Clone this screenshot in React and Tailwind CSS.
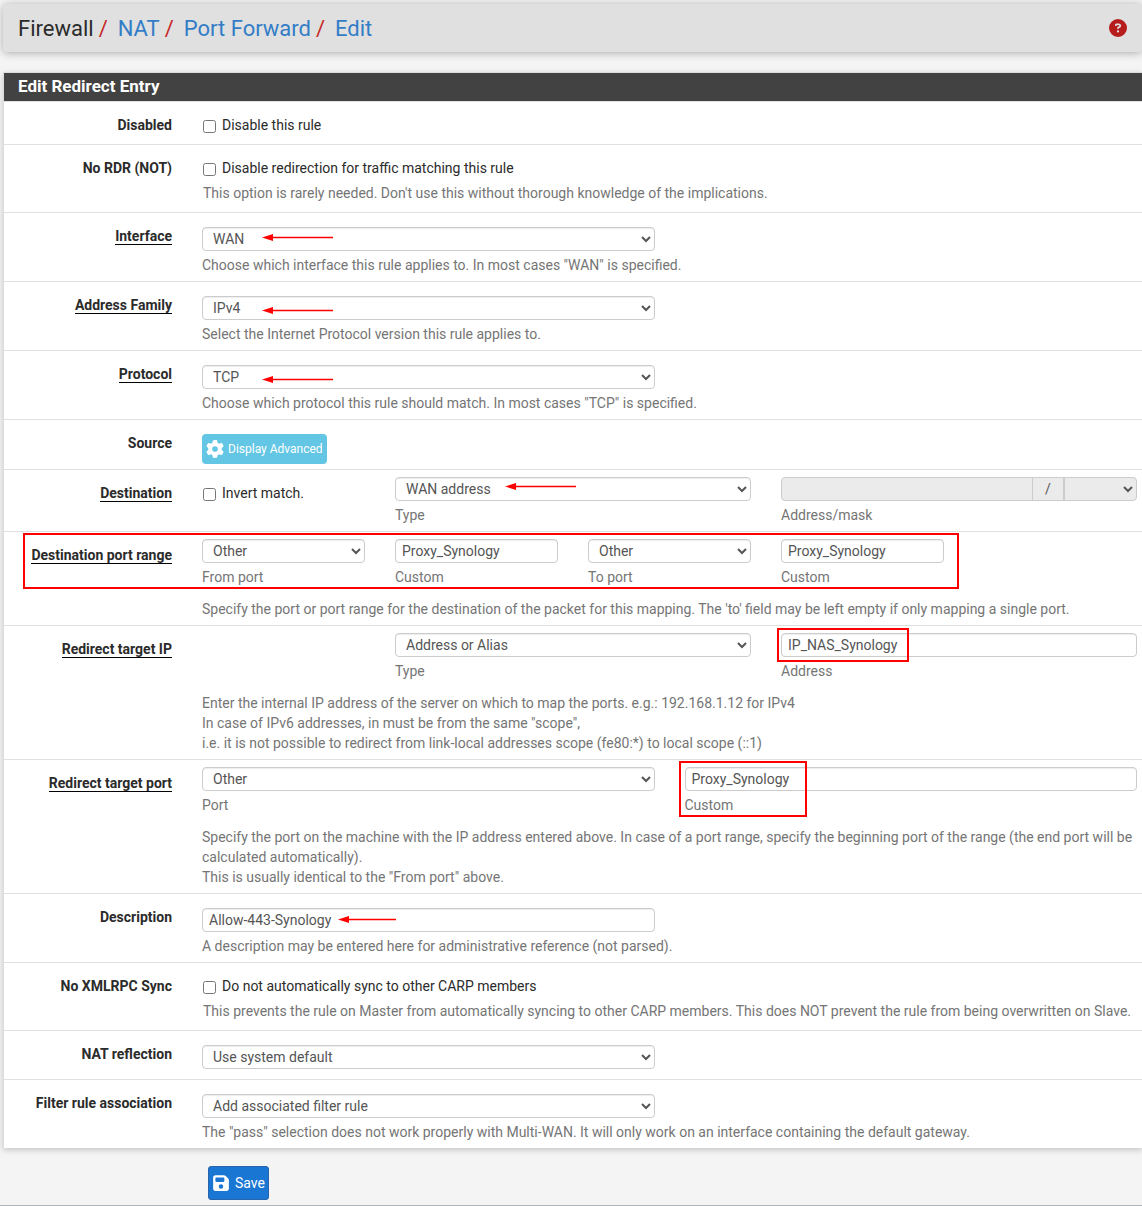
import React from 'react';
import { FaCircleQuestion, FaFloppyDisk, FaGear } from 'react-icons/fa6';

const fieldClass =
  'block h-6 w-full rounded border border-[#ccc] bg-white text-sm text-[#555] shadow-[inset_0_1px_1px_rgba(0,0,0,0.075)]';

const Select = ({ id, value, label }) => (
  <select id={id} aria-label={label} defaultValue={value} className={`${fieldClass} px-[6px]`}>
    <option>{value}</option>
  </select>
);

const TextInput = ({ id, value, label }) => (
  <input id={id} type="text" aria-label={label} defaultValue={value} className={`${fieldClass} px-[6px]`} />
);

const Checkbox = ({ id, text }) => (
  <label className="flex gap-[6px] pl-px leading-5">
    <input id={id} type="checkbox" className="mt-[5px] size-[13px]" />
    <span>{text}</span>
  </label>
);

const Help = ({ children }) => <p className="mt-1 leading-5 text-[#757575]">{children}</p>;

const Note = ({ children }) => <p className="mt-3 leading-5 text-[#757575]">{children}</p>;

const Columns = ({ children }) => <div className="grid grid-cols-10 gap-x-[30px]">{children}</div>;

const Arrow = ({ length = 71, className }) => (
  <svg width={length} height="8" viewBox={`0 0 ${length} 8`} className={`pointer-events-none absolute ${className}`}>
    <path d={`M8 4.5H${length}`} stroke="#f00" strokeWidth="1.5" />
    <path d="M0 4.5L11 1V8Z" fill="#f00" />
  </svg>
);

const Highlight = ({ className }) => (
  <div className={`pointer-events-none absolute border-2 border-[#f00] ${className}`} />
);

const Slash = () => <span className="mr-[10px] ml-[5px] text-[#c62828]">/</span>;

const Row = ({ label, htmlFor, required, className, children }) => (
  <div className="relative grid grid-cols-[168px_1fr] gap-[30px] border-b border-[#e0e0e0] pr-[5px] last:border-b-0">
    <label htmlFor={htmlFor} className="pt-[13px] text-right leading-5 font-bold">
      <span className={required ? 'border-b border-black' : ''}>{label}</span>
    </label>
    <div className={className}>{children}</div>
  </div>
);

const App = () => {
  return (
    <div className="min-h-screen overflow-x-hidden border-b border-[#adb5bd] bg-[#f4f4f4] pt-1 font-['Roboto',sans-serif] text-sm text-[#2b2b2b]">
      <header className="ml-[3px] flex h-12 items-center justify-between rounded-sm bg-[#e0e0e0] px-[15px] shadow-[0_1px_8px_rgba(0,0,0,0.3)]">
        <nav className="pt-px text-[22px] leading-8">
          <span>Firewall</span>
          <Slash />
          <a href="#nat" className="text-[#337dc7]">NAT</a>
          <Slash />
          <a href="#port-forward" className="text-[#337dc7]">Port Forward</a>
          <Slash />
          <a href="#edit" className="text-[#337dc7]">Edit</a>
        </nav>
        <a href="#help" aria-label="Help" className="text-[#b71c1c]">
          <FaCircleQuestion size={18} />
        </a>
      </header>

      <form>
        <section className="mt-5 ml-[3px] border-t border-l border-[#ddd] bg-white shadow-[0_2px_6px_rgba(0,0,0,0.2)]">
          <h2 className="border-b border-[#e0e0e0] bg-[#424242] bg-clip-padding pb-[2px] pl-[14px] text-[17px] leading-[26px] font-bold text-white">
            Edit Redirect Entry
          </h2>

          <Row label="Disabled" htmlFor="disabled" className="pt-[13px] pb-[9px]">
            <Checkbox id="disabled" text="Disable this rule" />
          </Row>

          <Row label="No RDR (NOT)" htmlFor="nordr" className="pt-[13px] pb-[9px]">
            <Checkbox id="nordr" text="Disable redirection for traffic matching this rule" />
            <p className="mt-[5px] pl-px leading-5 text-[#757575]">
              This option is rarely needed. Don't use this without thorough knowledge of the implications.
            </p>
          </Row>

          <Row label="Interface" htmlFor="interface" required className="pt-[14px] pb-[6px]">
            <Columns>
              <div className="relative col-span-5">
                <Select id="interface" value="WAN" />
                <Arrow className="top-[6px] left-[60px]" />
              </div>
            </Columns>
            <Help>Choose which interface this rule applies to. In most cases "WAN" is specified.</Help>
          </Row>

          <Row label="Address Family" htmlFor="ipprotocol" required className="pt-[14px] pb-[6px]">
            <Columns>
              <div className="relative col-span-5">
                <Select id="ipprotocol" value="IPv4" />
                <Arrow className="top-[10px] left-[60px]" />
              </div>
            </Columns>
            <Help>Select the Internet Protocol version this rule applies to.</Help>
          </Row>

          <Row label="Protocol" htmlFor="proto" required className="pt-[14px] pb-[6px]">
            <Columns>
              <div className="relative col-span-5">
                <Select id="proto" value="TCP" />
                <Arrow className="top-[10px] left-[60px]" />
              </div>
            </Columns>
            <Help>Choose which protocol this rule should match. In most cases "TCP" is specified.</Help>
          </Row>

          <Row label="Source" htmlFor="srcadv" className="pt-[14px] pb-[5px]">
            <button
              id="srcadv"
              type="button"
              className="flex h-[30px] items-center gap-1 rounded-sm bg-[#62c6e4] px-1 text-xs text-white"
            >
              <FaGear size={18} />
              Display Advanced
            </button>
          </Row>

          <Row label="Destination" htmlFor="dstnot" required className="pt-[7px] pb-[6px]">
            <Columns>
              <div className="col-span-2 pt-[6px]">
                <Checkbox id="dstnot" text="Invert match." />
              </div>
              <div className="relative col-span-4">
                <Select label="Type" value="WAN address" />
                <Arrow className="top-[5px] left-[110px]" />
                <Help>Type</Help>
              </div>
              <div className="col-span-4">
                <div className="flex h-6 overflow-hidden rounded border border-[#ccc] bg-[#ebebeb] text-[#555]">
                  <input type="text" aria-label="Address" disabled className="min-w-0 flex-1 px-[6px]" />
                  <span className="w-8 border-x border-[#ccc] text-center leading-[22px]">/</span>
                  <select aria-label="Mask" disabled className="w-[72px] border-l border-[#ccc]">
                    <option></option>
                  </select>
                </div>
                <Help>Address/mask</Help>
              </div>
            </Columns>
          </Row>

          <Row label="Destination port range" htmlFor="dstbeginport" required className="pt-[7px] pb-[6px]">
            <Columns>
              <div className="col-span-2">
                <Select id="dstbeginport" label="From port" value="Other" />
                <Help>From port</Help>
              </div>
              <div className="col-span-2">
                <TextInput label="Custom from port" value="Proxy_Synology" />
                <Help>Custom</Help>
              </div>
              <div className="col-span-2">
                <Select label="To port" value="Other" />
                <Help>To port</Help>
              </div>
              <div className="col-span-2">
                <TextInput label="Custom to port" value="Proxy_Synology" />
                <Help>Custom</Help>
              </div>
            </Columns>
            <Note>
              Specify the port or port range for the destination of the packet for this mapping. The 'to' field may be
              left empty if only mapping a single port.
            </Note>
            <Highlight className="top-px right-[183px] left-[19px] h-14" />
          </Row>

          <Row label="Redirect target IP" htmlFor="localip" required className="pt-[7px] pb-[6px]">
            <Columns>
              <div className="col-span-4 col-start-3">
                <Select label="Type" value="Address or Alias" />
                <Help>Type</Help>
              </div>
              <div className="relative col-span-4">
                <TextInput id="localip" value="IP_NAS_Synology" />
                <Highlight className="-top-[5px] -left-1 h-[34px] w-[132px]" />
                <Help>Address</Help>
              </div>
            </Columns>
            <Note>
              Enter the internal IP address of the server on which to map the ports. e.g.: 192.168.1.12 for IPv4
              <br />
              In case of IPv6 addresses, in must be from the same "scope",
              <br />
              i.e. it is not possible to redirect from link-local addresses scope (fe80:*) to local scope (::1)
            </Note>
          </Row>

          <Row label="Redirect target port" htmlFor="localport" required className="pt-[7px] pb-[6px]">
            <Columns>
              <div className="col-span-5">
                <Select id="localport" value="Other" />
                <Help>Port</Help>
              </div>
              <div className="relative col-span-5">
                <TextInput label="Custom target port" value="Proxy_Synology" />
                <Help>Custom</Help>
                <Highlight className="-top-[6px] -left-[6px] h-14 w-32" />
              </div>
            </Columns>
            <Note>
              Specify the port on the machine with the IP address entered above. In case of a port range, specify the
              beginning port of the range (the end port will be calculated automatically).
              <br />
              This is usually identical to the "From port" above.
            </Note>
          </Row>

          <Row label="Description" htmlFor="descr" className="pt-[14px] pb-[6px]">
            <Columns>
              <div className="relative col-span-5">
                <TextInput id="descr" value="Allow-443-Synology" />
                <Arrow length={58} className="top-[7px] left-[136px]" />
              </div>
            </Columns>
            <Help>A description may be entered here for administrative reference (not parsed).</Help>
          </Row>

          <Row label="No XMLRPC Sync" htmlFor="nosync" className="pt-[13px] pb-[9px]">
            <Checkbox id="nosync" text="Do not automatically sync to other CARP members" />
            <p className="mt-[5px] pl-px leading-5 text-[#757575]">
              This prevents the rule on Master from automatically syncing to other CARP members. This does NOT prevent
              the rule from being overwritten on Slave.
            </p>
          </Row>

          <Row label="NAT reflection" htmlFor="natreflection" className="pt-[14px] pb-[10px]">
            <Columns>
              <div className="col-span-5">
                <Select id="natreflection" value="Use system default" />
              </div>
            </Columns>
          </Row>

          <Row label="Filter rule association" htmlFor="associated" className="pt-[14px] pb-[6px]">
            <Columns>
              <div className="col-span-5">
                <Select id="associated" value="Add associated filter rule" />
              </div>
            </Columns>
            <Help>
              The "pass" selection does not work properly with Multi-WAN. It will only work on an interface containing
              the default gateway.
            </Help>
          </Row>
        </section>

        <button
          type="submit"
          className="mt-[18px] mb-[5px] ml-[208px] flex h-[34px] items-center gap-[5px] rounded-[3px] border border-[#2a62ac] bg-[#1976d2] px-[3px] pb-px text-sm text-white"
        >
          <FaFloppyDisk size={18} />
          Save
        </button>
      </form>
    </div>
  );
};

export default App;
